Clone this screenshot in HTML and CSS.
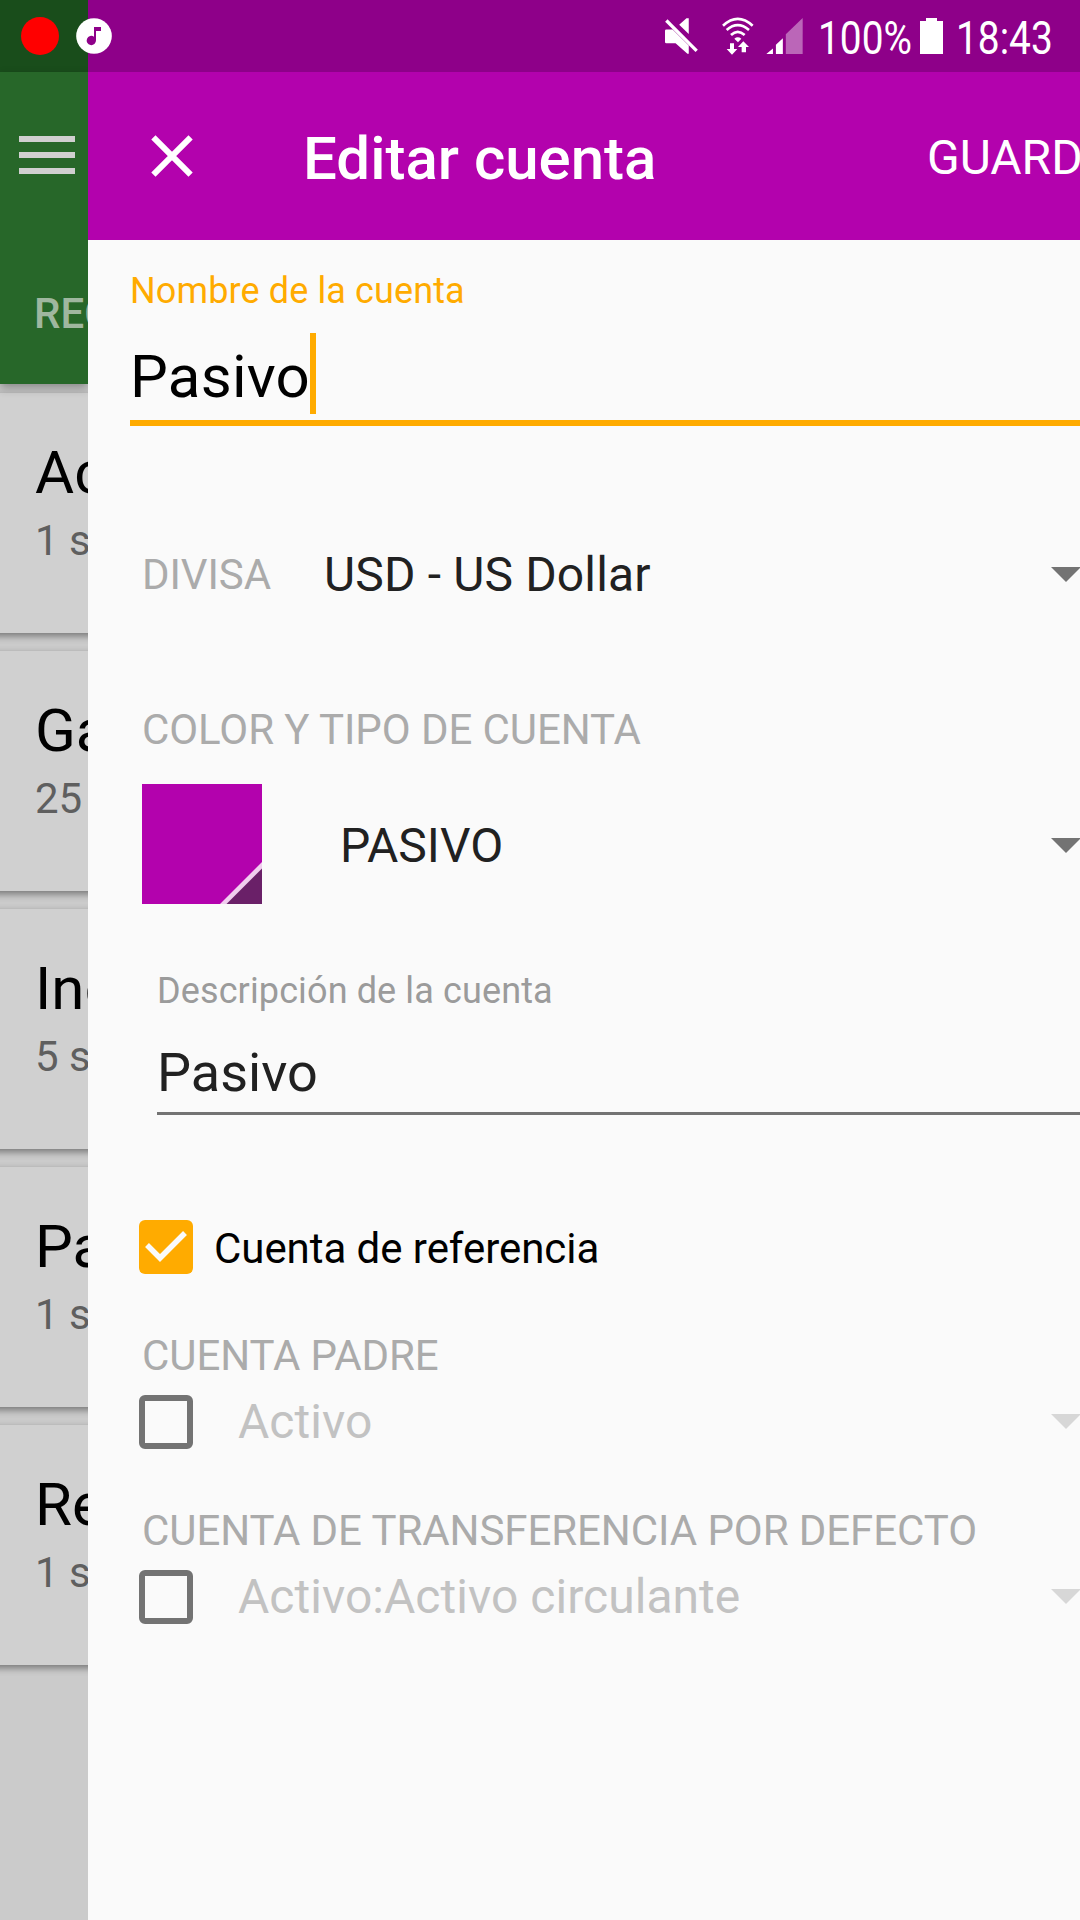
FILE: index.html
```html
<!DOCTYPE html>
<html lang="es">
<head>
<meta charset="utf-8">
<title>Editar cuenta</title>
<link rel="stylesheet" href="styles.css">
</head>
<body>
<div class="device">
  <aside class="backdrop">
    <div class="backdrop-status"></div>
    <header class="backdrop-header">
      <svg class="menu-icon" viewBox="0 0 56 38"><path d="M0 0h56v6H0zM0 16h56v6H0zM0 32h56v6H0z"/></svg>
      <div class="tab">REC</div>
    </header>
    <div class="cards">
      <div class="card"><div class="card-name">Ac</div><div class="card-sub">1 s</div></div>
      <div class="card"><div class="card-name">Ga</div><div class="card-sub">25</div></div>
      <div class="card"><div class="card-name">Ing</div><div class="card-sub">5 s</div></div>
      <div class="card"><div class="card-name">Pa</div><div class="card-sub">1 s</div></div>
      <div class="card"><div class="card-name">Re</div><div class="card-sub">1 s</div></div>
    </div>
  </aside>
  <main class="editor">
    <div class="editor-status"></div>
    <header class="editor-header">
      <svg class="close-icon" viewBox="0 0 42 42"><path d="M2.4 2.4l37.2 37.2M39.6 2.4L2.4 39.6"/></svg>
      <h1 class="title">Editar cuenta</h1>
      <div class="save">GUARD</div>
    </header>
    <form class="form">
      <div class="name-field">
        <div class="hint accent">Nombre de la cuenta</div>
        <div class="name-value">Pasivo<span class="caret"></span></div>
      </div>
      <div class="row currency">
        <span class="label">DIVISA</span>
        <span class="value">USD - US Dollar</span>
        <svg class="arrow" viewBox="0 0 30 15"><path d="M0 0h30L15 15z"/></svg>
      </div>
      <div class="label type-label">COLOR Y TIPO DE CUENTA</div>
      <div class="row type">
        <svg class="swatch" viewBox="0 0 120 120"><path fill="#b302ad" d="M0 0h120v120H0z"/><path fill="#f1cdef" d="M120 78v42H78z"/><path fill="#6a2068" d="M120 84.500v35.500H84.500z"/></svg>
        <span class="value">PASIVO</span>
        <svg class="arrow" viewBox="0 0 30 15"><path d="M0 0h30L15 15z"/></svg>
      </div>
      <div class="desc-field">
        <div class="hint">Descripción de la cuenta</div>
        <div class="desc-value">Pasivo</div>
      </div>
      <div class="row reference">
        <svg class="box" viewBox="0 0 54 54"><rect width="54" height="54" rx="6" fill="#ffab00"/><path d="M8 25l13 13 25-25" fill="none" stroke="#fafafa" stroke-width="5.500"/></svg>
        <span class="check-label">Cuenta de referencia</span>
      </div>
      <div class="label">CUENTA PADRE</div>
      <div class="row option">
        <span class="box empty"></span>
        <span class="value">Activo</span>
        <svg class="arrow" viewBox="0 0 30 15"><path d="M0 0h30L15 15z"/></svg>
      </div>
      <div class="label transfer-label">CUENTA DE TRANSFERENCIA POR DEFECTO</div>
      <div class="row option">
        <span class="box empty"></span>
        <span class="value">Activo:Activo circulante</span>
        <svg class="arrow" viewBox="0 0 30 15"><path d="M0 0h30L15 15z"/></svg>
      </div>
    </form>
  </main>
  <div class="status">
    <span class="record"></span>
    <svg class="music" viewBox="228 54 108 108"><circle cx="282" cy="108" r="53.500"/><path fill="#8e0089" d="M282 81h21v12h-15v28a14 14 0 1 1-6-11z"/></svg>
    <svg class="mute" viewBox="75 54 100 108"><path d="M147 54v48l-29-28 22-20z"/><path d="M75 92q0-4 4-4h19l49 49v25h-4l-36-32H79q-4 0-4-4z"/><path d="M79 61l92 92" fill="none" stroke="#fff" stroke-width="10"/></svg>
    <svg class="wifi" viewBox="245 50 96 114"><g fill="none" stroke="#fff" stroke-width="8"><path d="M248 76q44-41 89 0"/><path d="M259 89q33-29 67 0"/><path d="M272 104q20-19 41 0"/></g><path d="M282 115q10-8 21 0l-10 11zM269 129h12v17h10l-16 17-16-17h10zM304 156v-16h-11l16-17 17 17h-9v16z"/></svg>
    <svg class="signal" viewBox="376 53 110 109"><path d="M376 162l20-17v17zM405 162v-28l21-20v48z"/><path fill-opacity=".4" d="M435 162v-60l51-49v109z"/></svg>
    <span class="battery-text"><span class="narrow">100%</span></span>
    <svg class="battery" viewBox="0 0 23 36"><path d="M6 0h11v3h6v33H0V3h6z"/></svg>
    <span class="clock"><span class="narrow">18:43</span></span>
  </div>
</div>
</body>
</html>
```
FILE: styles.css
```css
* { box-sizing: border-box; }
body { margin: 0; font-family: Roboto, sans-serif; }
svg { display: block; flex: none; overflow: visible; }

.device {
  position: relative;
  display: grid;
  grid-template-columns: 88px 992px;
  width: 1080px;
  height: 1920px;
  overflow: hidden;
}

/* previous screen, dimmed */
.backdrop { overflow: hidden; background: #cbcbcb; white-space: nowrap; }
.backdrop-status { height: 72px; background: #194d1b; }
.backdrop-header {
  position: relative;
  height: 312px;
  padding: 64px 0 0 19px;
  background: #276729;
  box-shadow: 0 4px 9px rgba(0, 0, 0, .32);
}
.menu-icon { width: 56px; height: 38px; fill: #d0d0d0; }
.tab {
  margin: 110px 0 0 15px;
  font-size: 42px;
  font-weight: 500;
  line-height: 60px;
  color: #9fb79f;
}
.cards { display: grid; gap: 18px; padding-top: 9px; }
.card {
  height: 240px;
  margin: 0 -8px;
  padding: 50px 0 0 43px;
  background: #d0d0d0;
  box-shadow: 0 3px 7px rgba(0, 0, 0, .42);
}
.card-name { font-size: 60px; line-height: 60px; color: #000; }
.card-sub { margin-top: 8px; font-size: 42px; line-height: 60px; color: #5f5f5f; }

/* edit screen */
.editor { position: relative; overflow: hidden; background: #fafafa; white-space: nowrap; }
.editor-status { height: 72px; background: #8e0089; }
.editor-header {
  display: flex;
  align-items: center;
  height: 168px;
  padding-left: 63px;
  background: #b302ad;
  color: #fff;
}
.close-icon { width: 42px; height: 42px; fill: none; stroke: #fff; stroke-width: 6; }
.title { flex: none; width: 624px; margin: 6px 0 0 110px; font-size: 60px; font-weight: 500; line-height: 60px; }
.save { flex: none; margin-top: 4px; font-size: 48px; line-height: 60px; }

.form { padding-left: 51px; }
.name-field { height: 166px; margin: 20px 0 0 -9px; padding-top: 1px; border-bottom: 6px solid #ffab00; }
.hint { font-size: 36px; line-height: 60px; letter-spacing: .12px; color: #9b9b9b; }
.hint.accent { color: #ffab00; }
.name-value { display: flex; height: 81px; margin-top: 12px; font-size: 60px; line-height: 88px; letter-spacing: .25px; }
.caret { width: 6px; height: 81px; background: #ffab00; }

.row { display: flex; align-items: center; }
.label { padding-left: 3px; font-size: 42px; line-height: 60px; letter-spacing: -.07px; color: #ababab; }
.value { flex: 1; font-size: 48px; line-height: 60px; color: #212121; }
.arrow { width: 30px; height: 15px; margin-right: -1px; fill: #737373; }

.currency { height: 60px; margin-top: 119px; }
.currency .value { padding-left: 53px; letter-spacing: .15px; }
.currency .arrow { margin-bottom: 1px; }
.type-label { margin-top: 95px; }
.type { height: 120px; margin-top: 24px; padding-left: 3px; }
.swatch { width: 120px; height: 120px; }
.type .value { padding: 3px 0 0 78px; }
.type .arrow { margin-top: 3px; }

.desc-field { height: 154px; margin: 57px 0 0 18px; border-bottom: 3px solid #737373; }
.desc-value { margin-top: 22px; font-size: 54px; line-height: 60px; color: #212121; }

.reference { height: 54px; margin: 105px 0 52px; }
.box { flex: none; width: 54px; height: 54px; }
.box.empty { border: 6px solid #737373; border-radius: 6px; }
.check-label { padding: 4px 0 0 21px; font-size: 42px; line-height: 60px; letter-spacing: -.05px; color: #000; }
.option { height: 54px; margin-top: 9px; }
.option .value { padding-left: 45px; letter-spacing: .04px; color: #c2c2c2; }
.option .arrow { margin-bottom: 1px; fill: #d7d7d7; }
.transfer-label { margin-top: 52px; }

/* system status icons float over both screens */
.status {
  position: absolute;
  inset: 0 0 auto 0;
  display: flex;
  align-items: center;
  height: 72px;
  padding-left: 21px;
  color: #fff;
  fill: #fff;
}
.record { width: 38px; height: 38px; border-radius: 50%; background: red; }
.music { width: 36px; height: 36px; margin-left: 17px; }
.mute { width: 33px; height: 36px; margin-left: 553px; }
.wifi { width: 32px; height: 38px; margin-left: 24px; }
.signal { width: 37px; height: 36px; margin-left: 12px; }
.battery-text { width: 93px; margin-left: 15px; }
.battery { width: 23px; height: 36px; margin-left: 9px; }
.clock { width: 100px; margin-left: 13px; }
.narrow {
  display: inline-block;
  padding-top: 3px;
  font-size: 46px;
  line-height: 60px;
  transform: scaleX(.845);
  transform-origin: left;
}
```
